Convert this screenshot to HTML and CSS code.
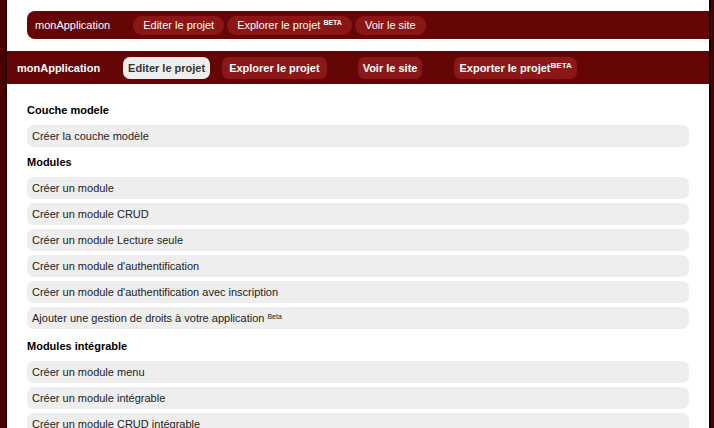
FILE: index.html
```html
<!DOCTYPE html>
<html lang="fr">
<head>
<meta charset="utf-8">
<title>monApplication</title>
<link rel="stylesheet" href="styles.css">
</head>
<body>
<div class="page">
  <div class="topbar">
    <span class="tb-brand">monApplication</span>
    <span class="tb-pill tb-first">Editer le projet</span>
    <span class="tb-pill">Explorer le projet <sup>BETA</sup></span>
    <span class="tb-pill">Voir le site</span>
  </div>
  <nav class="navbar">
    <span class="nb-brand">monApplication</span>
    <span class="nb-pill nb-active nb-edit">Editer le projet</span>
    <span class="nb-pill nb-explore">Explorer le projet</span>
    <span class="nb-pill nb-voir">Voir le site</span>
    <span class="nb-pill nb-export">Exporter le projet<sup>BETA</sup></span>
  </nav>
  <div class="list">
    <div class="heading">Couche modele</div>
    <div class="row">Créer la couche modèle</div>
    <div class="heading">Modules</div>
    <div class="row">Créer un module</div>
    <div class="row">Créer un module CRUD</div>
    <div class="row">Créer un module Lecture seule</div>
    <div class="row">Créer un module d'authentification</div>
    <div class="row">Créer un module d'authentification avec inscription</div>
    <div class="row">Ajouter une gestion de droits à votre application <sup>Beta</sup></div>
    <div class="heading heading-spaced">Modules intégrable</div>
    <div class="row">Créer un module menu</div>
    <div class="row">Créer un module intégrable</div>
    <div class="row">Créer un module CRUD intégrable</div>
  </div>
</div>
</body>
</html>
```

FILE: styles.css
```css
html, body {
  margin: 0;
  padding: 0;
  height: 100%;
  overflow: hidden;
}
body {
  background: #4e0000;
  font-family: "Liberation Sans", Arial, sans-serif;
  font-size: 11px;
}
.page {
  margin-left: 5px;
  width: 702px;
  height: 100%;
  background: #ffffff;
  border-left: 2px solid #1c0000;
  border-right: 2px solid #1c0000;
  overflow: hidden;
}
.topbar {
  margin: 11px 0 0 20px;
  height: 28px;
  background: #650606;
  border-radius: 8px 0 0 8px;
  display: flex;
  align-items: center;
  padding-left: 8px;
  color: #ffffff;
}
.tb-brand {
  margin-right: 23px;
}
.tb-pill {
  height: 19px;
  line-height: 19px;
  padding: 0 10px;
  background: #8a1616;
  border-radius: 9px;
  margin-right: 3px;
  white-space: nowrap;
}
.tb-pill sup {
  font-size: 7px;
  font-weight: bold;
  vertical-align: top;
  line-height: 1;
  position: relative;
  top: 3px;
}
.navbar {
  margin-top: 12px;
  height: 33px;
  background: #650606;
  display: flex;
  align-items: center;
  padding-left: 10px;
  color: #ffffff;
  font-weight: bold;
}
.nb-brand {
  margin-right: 23px;
}
.nb-pill {
  height: 22px;
  line-height: 22px;
  padding: 0 5px;
  background: #8a1818;
  border-radius: 7px;
  white-space: nowrap;
  margin-top: 1px;
}
.nb-pill sup {
  font-size: 8px;
  font-weight: bold;
  vertical-align: top;
  line-height: 1;
  position: relative;
  top: 5px;
}
.nb-active {
  background: #eeeeee;
  color: #333333;
}
.nb-explore {
  margin-left: 12px;
  padding: 0 7px;
}
.nb-voir {
  margin-left: 31px;
}
.nb-export {
  margin-left: 32px;
}
.list {
  margin: 15px 20px 0 20px;
  display: flex;
  flex-direction: column;
  gap: 4px;
}
.heading {
  height: 22px;
  line-height: 22px;
  font-weight: bold;
  color: #000000;
}
.heading-spaced {
  margin-top: 2px;
}
.row {
  height: 22px;
  line-height: 22px;
  background: #eeeeee;
  border-radius: 7px;
  padding-left: 5px;
  color: #222222;
  flex-shrink: 0;
}
.row sup {
  font-size: 7px;
  vertical-align: top;
  line-height: 1;
  position: relative;
  top: 6px;
}
```
